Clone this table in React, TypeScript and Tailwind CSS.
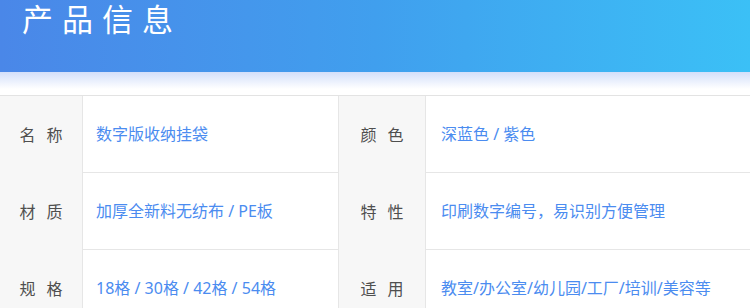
const rows = [
  { l1: ["名", "称"], v1: "数字版收纳挂袋", l2: ["颜", "色"], v2: "深蓝色 / 紫色" },
  { l1: ["材", "质"], v1: "加厚全新料无纺布 / PE板", l2: ["特", "性"], v2: "印刷数字编号，易识别方便管理" },
  { l1: ["规", "格"], v1: "18格 / 30格 / 42格 / 54格", l2: ["适", "用"], v2: "教室/办公室/幼儿园/工厂/培训/美容等" },
];

function Label({ chars }: { chars: string[] }) {
  return (
    <div className="flex items-center justify-center gap-[11px] bg-[#f7f7f7] border-r border-[#e6e6e6] text-[16px] text-[#4f4f4f]">
      {chars.map((c) => (
        <span key={c}>{c}</span>
      ))}
    </div>
  );
}

export default function App() {
  return (
    <div
      className="w-[750px] h-[308px] overflow-hidden bg-white"
      style={{ fontFamily: '"Noto Sans", "Noto Sans CJK SC", sans-serif' }}
    >
      {/* Header */}
      <div className="h-[72px] bg-gradient-to-r from-[#4a87e8] via-[#409fee] to-[#3bc0f6] pl-[22px] pt-[1px]">
        <h1 className="text-[31px] leading-[36px] tracking-[9px] font-normal text-white">产品信息</h1>
      </div>
      <div className="h-[17px] bg-gradient-to-b from-[#d3dffa] to-white" />
      <div className="h-[6px] bg-white" />

      {/* Table */}
      <div className="grid grid-cols-[83px_256px_87px_1fr] border-t border-[#e3e3e3]">
        {rows.map((r, i) => (
          <div key={i} className="contents">
            <Label chars={r.l1} />
            <div className="h-[77px] flex items-center pl-[13px] border-r border-b border-[#e6e6e6] text-[16px] text-[#4b8cf0]">
              {r.v1}
            </div>
            <Label chars={r.l2} />
            <div className="h-[77px] flex items-center pl-[15px] border-b border-[#e6e6e6] text-[16px] text-[#4b8cf0]">
              {r.v2}
            </div>
          </div>
        ))}
      </div>
    </div>
  );
}
